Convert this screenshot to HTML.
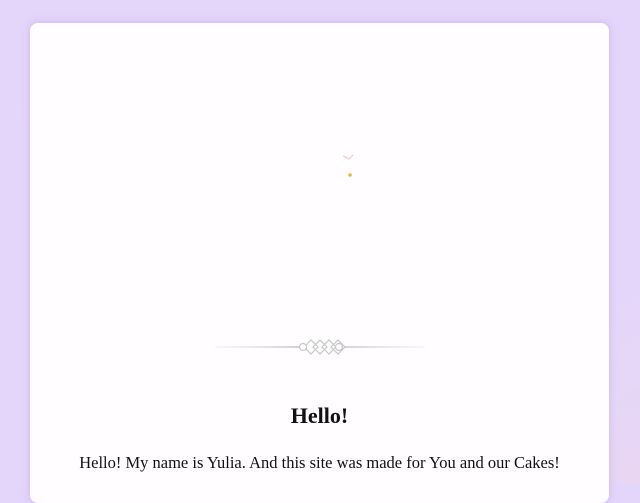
<!DOCTYPE html>
<html><head><style>
html,body{margin:0;padding:0;width:640px;height:484px;overflow:hidden;background:linear-gradient(160deg,#e4d5fb 0%,#e4d6fb 70%,#e8d6f3 100%);font-family:"Liberation Serif",serif;}
.card{position:absolute;left:30px;top:23px;width:579px;height:480px;background:#fffdff;border-radius:8px;box-shadow:0 0 8px rgba(180,150,220,.5);}
h1{position:absolute;top:380px;left:0;width:100%;text-align:center;margin:0;font-size:22px;font-weight:bold;color:#111;}
p{position:absolute;top:430px;left:0;width:100%;text-align:center;margin:0;font-size:16.5px;color:#111;}
</style></head><body>
<div class="card">
<svg style="position:absolute;left:0;top:0" width="579" height="360">
<defs><linearGradient id="g" gradientUnits="userSpaceOnUse" x1="185" y1="0" x2="395" y2="0"><stop offset="0" stop-color="#ddd" stop-opacity="0.2"/><stop offset=".5" stop-color="#c4c4c4"/><stop offset="1" stop-color="#ddd" stop-opacity="0.2"/></linearGradient></defs>
<g stroke="#e8c9c0" stroke-width="1" fill="none"><path d="M313 133 l6 3 4-4"/></g>
<circle cx="320" cy="152" r="1.8" fill="#e5b84a"/>
<rect x="185" y="323" width="210" height="2" fill="url(#g)"/>
<g stroke="#c8c8c8" stroke-width="1.2" fill="#fff">
<path d="M274 324 l7-7 7 7-7 7z M283 324 l7-7 7 7-7 7z M292 324 l7-7 7 7-7 7z M301 324 l7-7 7 7-7 7z"/>
<circle cx="273" cy="324" r="3.5"/><circle cx="309" cy="324" r="3.5"/>
</g>
</svg>
<h1>Hello!</h1>
<p>Hello! My name is Yulia. And this site was made for You and our Cakes!</p>
</div>
</body></html>
